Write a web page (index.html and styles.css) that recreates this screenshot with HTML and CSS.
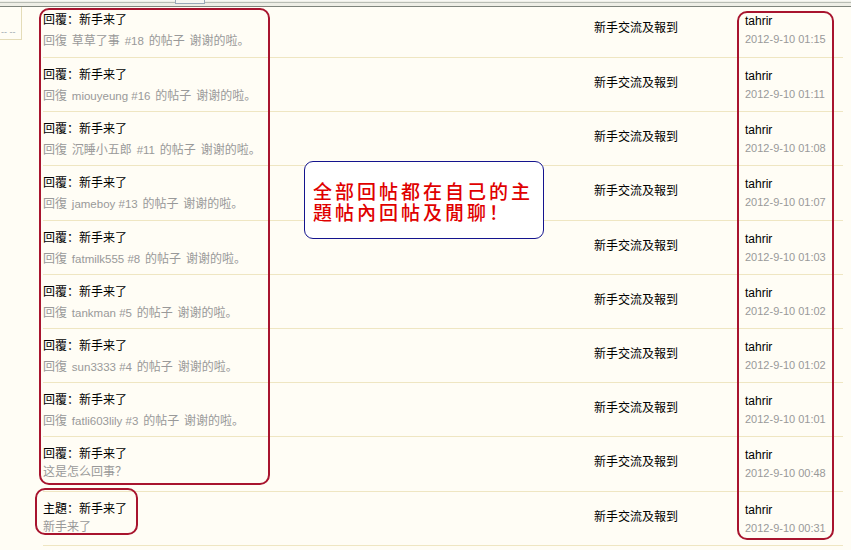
FILE: index.html
```html
<!DOCTYPE html>
<html lang="zh">
<head>
<meta charset="utf-8">
<title>帖子列表</title>
<link rel="stylesheet" href="styles.css">
</head>
<body>
<div class="topbar"><span class="tab"></span></div>
<div class="page">
  <div class="side"><span class="dash">-- --</span></div>
  <div class="list">
    <div class="row first">
      <div class="subj"><div class="t">回覆：新手来了</div><div class="s">回復 草草了事 <span class="lat">#18</span> 的帖子 谢谢的啦。</div></div>
      <div class="forum">新手交流及報到</div>
      <div class="auth"><div class="a">tahrir</div><div class="d">2012-9-10 01:15</div></div>
    </div>
    <div class="row">
      <div class="subj"><div class="t">回覆：新手来了</div><div class="s">回復 <span class="lat">miouyeung #16</span> 的帖子 谢谢的啦。</div></div>
      <div class="forum">新手交流及報到</div>
      <div class="auth"><div class="a">tahrir</div><div class="d">2012-9-10 01:11</div></div>
    </div>
    <div class="row">
      <div class="subj"><div class="t">回覆：新手来了</div><div class="s">回復 沉睡小五郎 <span class="lat">#11</span> 的帖子 谢谢的啦。</div></div>
      <div class="forum">新手交流及報到</div>
      <div class="auth"><div class="a">tahrir</div><div class="d">2012-9-10 01:08</div></div>
    </div>
    <div class="row">
      <div class="subj"><div class="t">回覆：新手来了</div><div class="s">回復 <span class="lat">jameboy #13</span> 的帖子 谢谢的啦。</div></div>
      <div class="forum">新手交流及報到</div>
      <div class="auth"><div class="a">tahrir</div><div class="d">2012-9-10 01:07</div></div>
    </div>
    <div class="row">
      <div class="subj"><div class="t">回覆：新手来了</div><div class="s">回復 <span class="lat">fatmilk555 #8</span> 的帖子 谢谢的啦。</div></div>
      <div class="forum">新手交流及報到</div>
      <div class="auth"><div class="a">tahrir</div><div class="d">2012-9-10 01:03</div></div>
    </div>
    <div class="row">
      <div class="subj"><div class="t">回覆：新手来了</div><div class="s">回復 <span class="lat">tankman #5</span> 的帖子 谢谢的啦。</div></div>
      <div class="forum">新手交流及報到</div>
      <div class="auth"><div class="a">tahrir</div><div class="d">2012-9-10 01:02</div></div>
    </div>
    <div class="row">
      <div class="subj"><div class="t">回覆：新手来了</div><div class="s">回復 <span class="lat">sun3333 #4</span> 的帖子 谢谢的啦。</div></div>
      <div class="forum">新手交流及報到</div>
      <div class="auth"><div class="a">tahrir</div><div class="d">2012-9-10 01:02</div></div>
    </div>
    <div class="row">
      <div class="subj"><div class="t">回覆：新手来了</div><div class="s">回復 <span class="lat">fatli603lily #3</span> 的帖子 谢谢的啦。</div></div>
      <div class="forum">新手交流及報到</div>
      <div class="auth"><div class="a">tahrir</div><div class="d">2012-9-10 01:01</div></div>
    </div>
    <div class="row">
      <div class="subj"><div class="t">回覆：新手来了</div><div class="s cjk">这是怎么回事？</div></div>
      <div class="forum">新手交流及報到</div>
      <div class="auth"><div class="a">tahrir</div><div class="d">2012-9-10 00:48</div></div>
    </div>
    <div class="row">
      <div class="subj"><div class="t">主題：新手来了</div><div class="s cjk">新手来了</div></div>
      <div class="forum">新手交流及報到</div>
      <div class="auth"><div class="a">tahrir</div><div class="d">2012-9-10 00:31</div></div>
    </div>
  </div>
</div>
<div class="mark mark-replies"></div>
<div class="mark mark-topic"></div>
<div class="mark mark-author"></div>
<div class="note"><div class="note-line">全部回帖都在自己的主</div><div class="note-line">題帖內回帖及閒聊！</div></div>
</body>
</html>
```
FILE: styles.css
```css
html, body {
  margin: 0;
  padding: 0;
}
body {
  background: #fffdf5;
  font-family: "Liberation Sans", "Noto Sans CJK SC", sans-serif;
  font-size: 12px;
  color: #000;
  width: 851px;
  height: 550px;
  overflow: hidden;
  position: relative;
}
.topbar {
  height: 5px;
  background: #eeeee6;
  border-top: 1px solid #f8f8f4;
  border-bottom: 1px solid #7f847c;
  position: relative;
}
.topbar::before {
  content: "";
  position: absolute;
  left: 0;
  right: 0;
  top: 1px;
  height: 1px;
  background: #b8bcb4;
}
.tab {
  position: absolute;
  left: 175px;
  top: -1px;
  width: 28px;
  height: 3px;
  border: 1px solid #9aa8b8;
  border-top: none;
  background: #f6f6f2;
}
.page {
  display: flex;
  align-items: flex-start;
}
.side {
  width: 22px;
  height: 33px;
  border-right: 1px solid #e4dcb8;
  border-bottom: 1px solid #e4dcb8;
  box-sizing: border-box;
  position: relative;
  overflow: hidden;
}
.dash {
  position: absolute;
  left: 1px;
  top: 20px;
  font-size: 9px;
  color: #a0a8b0;
  white-space: nowrap;
}
.list {
  margin-left: 21px;
  width: 800px;
}
.row {
  display: grid;
  grid-template-columns: 551px 151px 98px;
  height: 53.2px;
  border-bottom: 1px solid #efe6c2;
  overflow: hidden;
}
.row.first {
  height: 50px;
}
.row.first > div {
  margin-top: -4px;
}
.subj {
  padding-top: 8px;
}
.t {
  line-height: 18px;
  white-space: nowrap;
}
.s {
  margin-top: 3px;
  line-height: 18px;
  color: #999;
  white-space: nowrap;
  word-spacing: 1.5px;
}
.s.cjk {
  margin-top: 0;
}
.lat {
  font-size: 11.5px;
  word-spacing: 0;
}
.forum {
  padding-top: 16px;
  line-height: 19px;
  white-space: nowrap;
}
.auth {
  padding-top: 10px;
}
.a {
  line-height: 17px;
}
.d {
  line-height: 18px;
  font-size: 11px;
  color: #999;
  white-space: nowrap;
}
.mark {
  position: absolute;
  border: 2px solid #a8142e;
  border-radius: 10px;
  box-sizing: border-box;
}
.mark-replies {
  left: 39px;
  top: 8px;
  width: 231px;
  height: 477px;
}
.mark-topic {
  left: 35px;
  top: 488px;
  width: 103px;
  height: 47px;
}
.mark-author {
  left: 737px;
  top: 11px;
  width: 97px;
  height: 529px;
}
.note {
  position: absolute;
  left: 304px;
  top: 161px;
  width: 240px;
  height: 78px;
  box-sizing: border-box;
  border: 1px solid #14148e;
  border-radius: 9px;
  background: #fff;
  padding: 18px 0 0 8px;
  font-family: "Noto Sans CJK TC", sans-serif;
  font-size: 19px;
  font-weight: 500;
  letter-spacing: 3px;
  color: #e00000;
  white-space: nowrap;
}
.note-line {
  height: 21px;
  line-height: 21px;
}
```
